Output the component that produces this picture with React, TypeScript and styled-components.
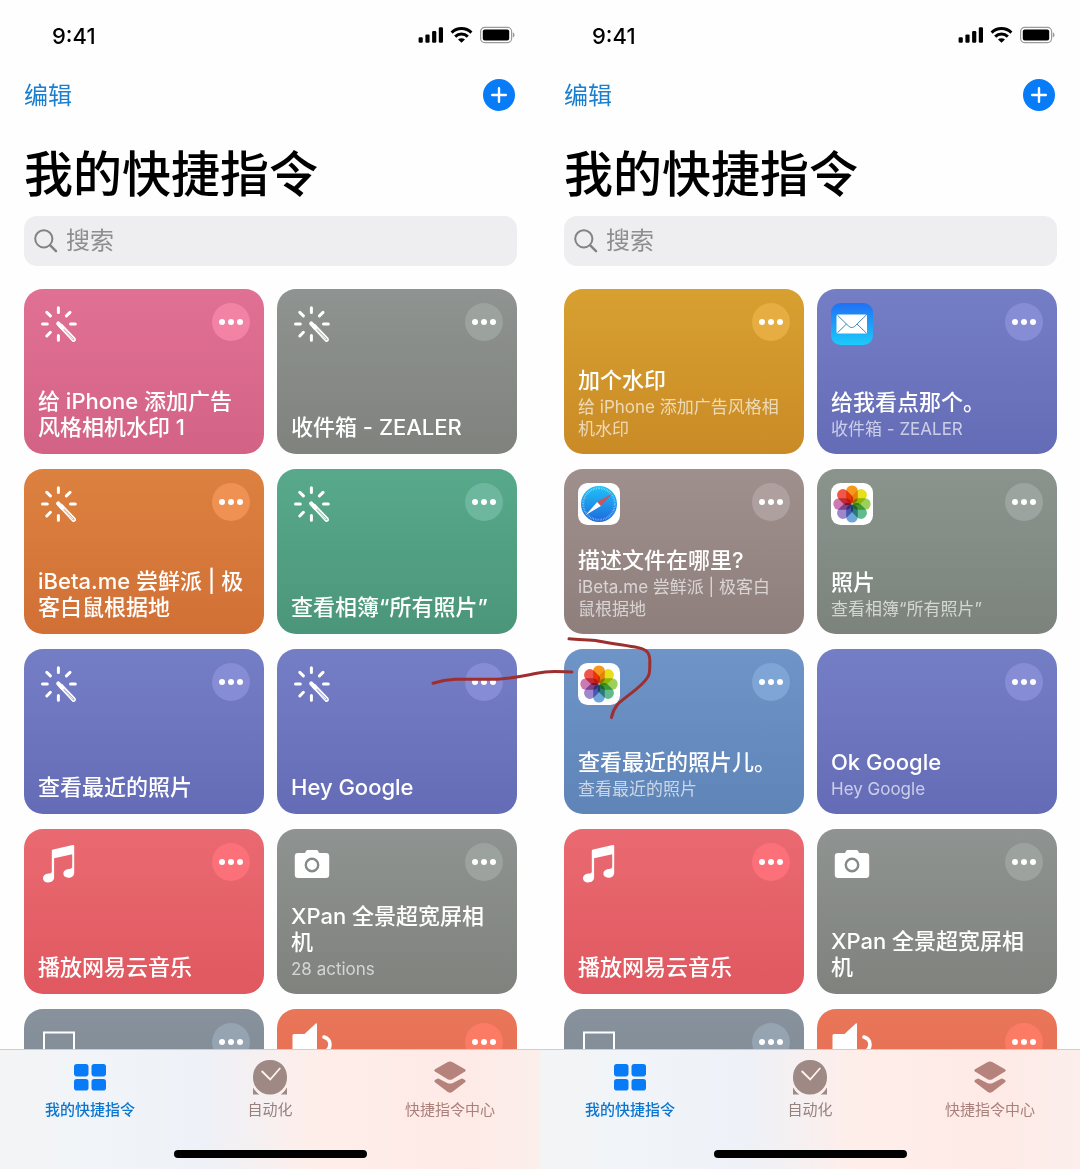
import React from "react";
import styled, { createGlobalStyle, css } from "styled-components";

const GlobalStyle = createGlobalStyle`
  *, *::before, *::after { box-sizing: border-box; }
  body {
    margin: 0;
    background: #fefefe;
    color: #000;
    font-family: Inter, "Noto Sans CJK SC", sans-serif;
  }
  h1, h2, p { margin: 0; }
  button, input { font: inherit; border: 0; padding: 0; background: none; }
`;

const Page = styled.div`
  position: relative;
  display: flex;
  height: 100vh;
  overflow: hidden;
`;

const Screen = styled.section`
  flex: 1;
  min-width: 0;
  display: flex;
  flex-direction: column;
`;

const StatusBar = styled.div`
  display: flex;
  align-items: center;
  justify-content: space-between;
  height: 70px;
  padding: 0 25px 0 52px;
`;

const Clock = styled.time`
  padding-top: 2px;
  font-size: 22px;
  line-height: 26px;
  font-weight: 500;
`;

const Toolbar = styled.header`
  display: flex;
  align-items: center;
  justify-content: space-between;
  height: 50px;
  padding: 0 25px 0 24px;
`;

const EditButton = styled.button`
  padding-top: 2px;
  font-size: 24px;
  line-height: 30px;
  font-weight: 400;
  color: #1b7fd0;
`;

const AddButton = styled.button`
  display: grid;
  place-items: center;
  width: 32px;
  height: 32px;
  border-radius: 50%;
  background: #087bf6;
`;

const Title = styled.h1`
  padding: 25px 24px 11px;
  font-size: 49px;
  line-height: 60px;
  font-weight: 500;
`;

const SearchField = styled.label`
  display: flex;
  align-items: center;
  gap: 8px;
  height: 50px;
  margin: 0 23px 23px 24px;
  padding: 0 10px;
  border-radius: 13px;
  background: #eeeef0;
`;

const SearchInput = styled.input`
  flex: 1;
  min-width: 0;
  font-size: 24px;
  line-height: 30px;
  font-weight: 400;
  outline: none;
  &::placeholder { color: #8e8e92; opacity: 1; }
`;

const ScrollArea = styled.main`
  flex: 1;
  min-height: 0;
  overflow: hidden;
`;

const CardGrid = styled.div`
  display: grid;
  grid-template-columns: 1fr 1fr;
  grid-auto-rows: 165px;
  gap: 15px 13px;
  padding: 0 23px 0 24px;
`;

const Card = styled.article<{ $from: string; $to: string }>`
  display: flex;
  flex-direction: column;
  justify-content: space-between;
  min-width: 0;
  padding: 14px;
  border-radius: 19px;
  background: linear-gradient(${(p) => p.$from}, ${(p) => p.$to});
  color: #fff;
`;

const CardTop = styled.div`
  display: flex;
  justify-content: space-between;
  align-items: flex-start;
  height: 42px;
`;

const IconSlot = styled.div`
  width: 42px;
  height: 42px;
  svg { display: block; }
`;

const MoreButton = styled.button<{ $tint: string }>`
  display: flex;
  align-items: center;
  justify-content: center;
  gap: 3px;
  width: 38px;
  height: 38px;
  border-radius: 50%;
  background: ${(p) => p.$tint};
`;

const Dot = styled.span`
  width: 6px;
  height: 6px;
  border-radius: 50%;
  background: #fff;
`;

const CardText = styled.div`
  display: flex;
  flex-direction: column;
  gap: 3px;
  padding-right: 5px;
`;

const CardTitle = styled.h2`
  font-size: 22px;
  line-height: 26px;
  font-weight: 500;
`;

const CardSubtitle = styled.p`
  font-size: 17px;
  line-height: 22px;
  font-weight: 400;
  color: rgba(255, 255, 255, 0.66);
`;

const TabBar = styled.footer`
  border-top: 1px solid #cfcdd0;
  background: linear-gradient(90deg, #f4f4f5 0%, #f1f4f8 15%, #eef1f7 38%, #f5f0f2 47%, #feeeea 58%, #feeae6 85%, #fbeeeb 100%);
`;

const Tabs = styled.nav`
  display: grid;
  grid-template-columns: repeat(3, 1fr);
  height: 100px;
`;

const Tab = styled.button<{ $active?: boolean; $tone: string }>`
  display: flex;
  flex-direction: column;
  align-items: center;
  gap: 5px;
  padding-top: 9px;
  height: 100px;
  font-size: 15px;
  line-height: 20px;
  color: ${(p) => p.$tone};
  ${(p) => p.$active && css`font-weight: 500;`}
`;

const TabGlyph = styled.span`
  display: grid;
  place-items: center;
  height: 36px;
`;

const HomeIndicator = styled.div`
  width: 193px;
  height: 8px;
  margin: 0 auto 11px;
  border-radius: 4px;
  background: #000;
`;

const Annotation = styled.svg`
  position: absolute;
  top: 630px;
  left: calc(50% - 115px);
  pointer-events: none;
`;

const StatusIcons = () => (
  <svg width="97" height="18" viewBox="0 0 97 18" aria-hidden="true">
    <rect x="0.6" y="11.3" width="4.2" height="5.4" rx="1.2" />
    <rect x="7.4" y="8.4" width="4.2" height="8.3" rx="1.2" />
    <rect x="14.1" y="5" width="4.2" height="11.7" rx="1.2" />
    <rect x="20.8" y="1.2" width="4.2" height="15.5" rx="1.2" />
    <g fill="none" stroke="#000" strokeWidth="3">
      <path d="M33.6 6.6a14.2 14.2 0 0 1 19.8 0" />
      <path d="M37.2 10.6a9 9 0 0 1 12.6 0" />
    </g>
    <path d="M43.5 16.8l-3.5-3.2a5 5 0 0 1 7 0z" />
    <rect x="62.6" y="1.4" width="31" height="15.2" rx="4" fill="none" stroke="#9b9b9b" strokeWidth="1.2" />
    <rect x="64.8" y="3.6" width="26.4" height="10.8" rx="2" />
    <path d="M94.8 6.6c2.3.6 2.3 4.2 0 4.8z" fill="#9b9b9b" />
  </svg>
);

const Wand = () => (
  <svg width="42" height="42" viewBox="0 0 42 42" fill="none" stroke="#fff" strokeLinecap="round" aria-hidden="true">
    <path
      strokeWidth="3"
      d="M20.4 4.8v4.8M20.4 32.6v4.6M4.5 21h4.800M32.500 21h4.800M8.800 9.400l3.600 3.500M32 9.400l-3.600 3.500M8.800 33l3.600-3.700"
    />
    <path strokeWidth="4.200" d="M20.300 20.600l4 4.200" />
    <path strokeWidth="1.600" strokeLinejoin="round" d="M21.600 23.600l13 14.200c1.600 1 3.200-.4 2.300-2.200L23.600 21.600" />
    <path strokeWidth="0.900" d="M24 24.200l11.200 12" />
  </svg>
);

const Music = () => (
  <svg width="42" height="42" viewBox="0 0 42 42" fill="#fff" aria-hidden="true">
    <path d="M13.800 8.200c0-1 .5-1.500 1.400-1.700L34.700 2c.9-.2 1.500.2 1.500 1.100v26.600c0 3-2.400 5-6 5-3 0-4.800-1.700-4.800-4.100 0-2.900 2.300-4.200 5.300-4.700 2.500-.4 3.500-.8 3.500-2.200V11.300L16.100 15.300v19c0 3.200-2.400 5.200-6.100 5.200-3.100 0-5-1.700-5-4.200 0-2.800 2.300-4.200 5.300-4.700 2.500-.4 3.500-.8 3.500-2.200z" />
  </svg>
);

const Camera = () => (
  <svg width="42" height="42" viewBox="0 0 42 42" aria-hidden="true">
    <path
      fill="#fff"
      d="M7 10h6.200c1 0 1.300-.6 1.700-1.500.5-1.100 1-1.500 2.200-1.500h8c1.200 0 1.700.4 2.200 1.500.4.9.7 1.500 1.700 1.500h6c2 0 3.200 1.200 3.200 3v19c0 1.900-1.200 3-3.200 3H7c-2 0-3.200-1.100-3.200-3V13c0-1.800 1.200-3 3.200-3z"
    />
    <circle cx="21" cy="22" r="6.200" fill="#fff" stroke="#858a86" strokeWidth="2.400" />
  </svg>
);

const Display = () => (
  <svg width="42" height="42" viewBox="0 0 42 42" fill="none" stroke="#fff" strokeWidth="2" aria-hidden="true">
    <path d="M6 9.500h30v22H6zM21 32v6M14 38h14" />
  </svg>
);

const Speaker = () => (
  <svg width="42" height="42" viewBox="0 0 42 42" aria-hidden="true">
    <path fill="#fff" d="M1.500 12.500q0-1.500 1.500-1.500h10.500L24.800.6q1.200-.8 1.200.8v39q0 1.600-1.200.8L13.500 31H3q-1.500 0-1.500-1.500z" />
    <path fill="none" stroke="#fff" strokeWidth="3.600" strokeLinecap="round" d="M33 14c7.600 2.400 8 11.600 0.600 15" />
  </svg>
);

const Mail = () => (
  <svg width="42" height="42" viewBox="0 0 42 42" aria-hidden="true">
    <defs>
      <linearGradient id="mail-sky" x1="0" y1="0" x2="0" y2="1">
        <stop offset="0" stopColor="#2070f4" />
        <stop offset="1" stopColor="#1ccbfb" />
      </linearGradient>
    </defs>
    <rect width="42" height="42" rx="9.500" fill="url(#mail-sky)" />
    <rect x="5.500" y="11.500" width="30.500" height="19" rx="1.500" fill="#fff" />
    <g fill="none" stroke="#3a85b8" strokeWidth="1">
      <path d="M6.500 12.300l11 10.700c2.200 2 4.400 2 6.600 0L35 12.300" />
      <path d="M6.500 29.700l9-8.700M35 29.700L26 21" />
    </g>
  </svg>
);

const Safari = () => (
  <svg width="42" height="42" viewBox="0 0 42 42" aria-hidden="true">
    <defs>
      <linearGradient id="safari-sea" x1="0" y1="0" x2="0" y2="1">
        <stop offset="0" stopColor="#1fc3f7" />
        <stop offset="1" stopColor="#2068dc" />
      </linearGradient>
    </defs>
    <rect width="42" height="42" rx="9.500" fill="#fff" />
    <circle cx="21" cy="21" r="18" fill="url(#safari-sea)" />
    <circle cx="21" cy="21" r="15.800" fill="none" stroke="#fff" strokeOpacity="0.600" strokeWidth="2" strokeDasharray="0.550 1.105" />
    <path d="M34.500 10.500L19.200 19l3.600 4z" fill="#d0505c" />
    <path d="M7.800 32l11.400-13 3.600 4z" fill="#fff" />
  </svg>
);

const PETALS = ["#f7981d", "#e8de1c", "#9bd05a", "#62bb8c", "#6ea6dc", "#9c88ca", "#cd79b2", "#f0564a"];

const Petal = styled.rect`
  mix-blend-mode: multiply;
`;

const Photos = () => (
  <svg width="42" height="42" viewBox="0 0 42 42" aria-hidden="true">
    <rect width="42" height="42" rx="9.500" fill="#fff" />
    {PETALS.map((color, i) => (
      <Petal
        key={color}
        x="15.200"
        y="2.400"
        width="11.600"
        height="18"
        rx="5.600"
        fill={color}
        transform={`rotate(${i * 45} 21 21)`}
      />
    ))}
  </svg>
);

const GridGlyph = () => (
  <svg width="32" height="27" viewBox="0 0 32 27" fill="#087bf6" aria-hidden="true">
    <rect width="14.500" height="12.400" rx="2.800" />
    <rect x="17.500" width="14.500" height="12.400" rx="2.800" />
    <rect y="15" width="14.500" height="11.600" rx="2.800" />
    <rect x="17.500" y="15" width="14.500" height="11.600" rx="2.800" />
  </svg>
);

const ClockGlyph = () => (
  <svg width="34" height="35" viewBox="0 0 34 35" aria-hidden="true">
    <path fill="#9f8985" d="M0 27q2.400 4.600 6.500 7.400H0zM34 27q-2.400 4.600-6.500 7.400H34z" />
    <rect width="34" height="34.400" rx="16.500" fill="#9f8985" />
    <path d="M9.200 11.500l8 8 9.600-11" fill="none" stroke="#fff3ef" strokeWidth="1.800" strokeLinecap="round" />
    <path d="M-.5 24.200C1 28 4 32 8 34.700M34.500 24.200C33 28 30 32 26 34.700" fill="none" stroke="#faefed" strokeWidth="1.600" />
  </svg>
);

const StackGlyph = () => (
  <svg width="34" height="33" viewBox="0 0 34 33" fill="#b6837c" aria-hidden="true">
    <path d="M14.800 1Q17 0 19.200 1L32 8.200q1.600 1.200 0 2.400l-12.600 7.600q-2.400 1.200-4.800 0L2 10.600Q.4 9.400 2 8.200z" />
    <path d="M5.400 17.400l8.800 4.600q2.800 1.200 5.600 0l8.800-4.600q1.200-.2 3.400 1.500 1.600 1.200 0 2.400l-12.800 9.700q-2.200 1.400-4.400 0L2 21.300q-1.600-1.200 0-2.400 2.200-1.700 3.400-1.500z" />
  </svg>
);

const icons = {
  wand: Wand,
  music: Music,
  camera: Camera,
  display: Display,
  speaker: Speaker,
  mail: Mail,
  safari: Safari,
  photos: Photos,
};

const palette = {
  pink: { from: "#e17194", to: "#d36287", tint: "#f383a5" },
  gray: { from: "#8f9391", to: "#7f827d", tint: "#9ca29d" },
  orange: { from: "#dc813f", to: "#d17036", tint: "#ef9152" },
  green: { from: "#58a98b", to: "#4b967b", tint: "#6cb79d" },
  indigo: { from: "#747ec5", to: "#656cb7", tint: "#868dd4" },
  red: { from: "#ea6a71", to: "#e05860", tint: "#fc7079" },
  slate: { from: "#87929d", to: "#76818c", tint: "#96a3b0" },
  coral: { from: "#ea7659", to: "#de6548", tint: "#fc7b64" },
  amber: { from: "#d7a030", to: "#ca8b26", tint: "#e6ad43" },
  taupe: { from: "#9f908e", to: "#8e7e7c", tint: "#ada09e" },
  sage: { from: "#8a948d", to: "#7c837d", tint: "#9ba49e" },
  blue: { from: "#6f94c8", to: "#5f84b7", tint: "#7fa4d6" },
};

interface Shortcut {
  title: string;
  subtitle?: string;
  icon?: keyof typeof icons;
  color: keyof typeof palette;
}

const original: Shortcut[] = [
  { title: "给 iPhone 添加广告风格相机水印 1", icon: "wand", color: "pink" },
  { title: "收件箱 - ZEALER", icon: "wand", color: "gray" },
  { title: "iBeta.me 尝鲜派 | 极客白鼠根据地", icon: "wand", color: "orange" },
  { title: "查看相簿“所有照片”", icon: "wand", color: "green" },
  { title: "查看最近的照片", icon: "wand", color: "indigo" },
  { title: "Hey Google", icon: "wand", color: "indigo" },
  { title: "播放网易云音乐", icon: "music", color: "red" },
  { title: "XPan 全景超宽屏相机", subtitle: "28 actions", icon: "camera", color: "gray" },
  { title: "", icon: "display", color: "slate" },
  { title: "", icon: "speaker", color: "coral" },
];

const renamed: Shortcut[] = [
  { title: "加个水印", subtitle: "给 iPhone 添加广告风格相机水印", color: "amber" },
  { title: "给我看点那个。", subtitle: "收件箱 - ZEALER", icon: "mail", color: "indigo" },
  { title: "描述文件在哪里?", subtitle: "iBeta.me 尝鲜派 | 极客白鼠根据地", icon: "safari", color: "taupe" },
  { title: "照片", subtitle: "查看相簿“所有照片”", icon: "photos", color: "sage" },
  { title: "查看最近的照片儿。", subtitle: "查看最近的照片", icon: "photos", color: "blue" },
  { title: "Ok Google", subtitle: "Hey Google", color: "indigo" },
  { title: "播放网易云音乐", icon: "music", color: "red" },
  { title: "XPan 全景超宽屏相机", icon: "camera", color: "gray" },
  { title: "", icon: "display", color: "slate" },
  { title: "", icon: "speaker", color: "coral" },
];

const ShortcutCard = ({ title, subtitle, icon, color }: Shortcut) => {
  const Icon = icon ? icons[icon] : null;
  const { from, to, tint } = palette[color];
  return (
    <Card $from={from} $to={to}>
      <CardTop>
        <IconSlot>{Icon && <Icon />}</IconSlot>
        <MoreButton type="button" aria-label="更多" $tint={tint}>
          <Dot />
          <Dot />
          <Dot />
        </MoreButton>
      </CardTop>
      <CardText>
        {title && <CardTitle>{title}</CardTitle>}
        {subtitle && <CardSubtitle>{subtitle}</CardSubtitle>}
      </CardText>
    </Card>
  );
};

const Phone = ({ shortcuts }: { shortcuts: Shortcut[] }) => (
  <Screen>
    <StatusBar>
      <Clock>9:41</Clock>
      <StatusIcons />
    </StatusBar>
    <Toolbar>
      <EditButton type="button">编辑</EditButton>
      <AddButton type="button" aria-label="添加">
        <svg width="16" height="16" viewBox="0 0 16 16" stroke="#fff" strokeWidth="2.400" strokeLinecap="round" aria-hidden="true">
          <path d="M8 1.200v13.600M1.200 8h13.600" />
        </svg>
      </AddButton>
    </Toolbar>
    <Title>我的快捷指令</Title>
    <SearchField>
      <svg width="24" height="24" viewBox="0 0 24 24" fill="none" stroke="#828286" strokeLinecap="round" aria-hidden="true">
        <circle cx="9.800" cy="9.800" r="8.600" strokeWidth="2" />
        <path d="M16.200 16.400l5.800 5.800" strokeWidth="2.500" />
      </svg>
      <SearchInput type="search" placeholder="搜索" aria-label="搜索" />
    </SearchField>
    <ScrollArea>
      <CardGrid>
        {shortcuts.map((shortcut, i) => (
          <ShortcutCard key={i} {...shortcut} />
        ))}
      </CardGrid>
    </ScrollArea>
    <TabBar>
      <Tabs>
        <Tab type="button" $active $tone="#0b76d1">
          <TabGlyph><GridGlyph /></TabGlyph>
          我的快捷指令
        </Tab>
        <Tab type="button" $tone="#96817f">
          <TabGlyph><ClockGlyph /></TabGlyph>
          自动化
        </Tab>
        <Tab type="button" $tone="#a9807b">
          <TabGlyph><StackGlyph /></TabGlyph>
          快捷指令中心
        </Tab>
      </Tabs>
      <HomeIndicator />
    </TabBar>
  </Screen>
);

export default function App() {
  return (
    <>
      <GlobalStyle />
      <Page>
        <Phone shortcuts={original} />
        <Phone shortcuts={renamed} />
        <Annotation
          width="235"
          height="96"
          viewBox="425 630 235 96"
          fill="none"
          stroke="#9f2f2f"
          strokeWidth="3"
          strokeLinecap="round"
          strokeLinejoin="round"
          aria-hidden="true"
        >
          <path d="M433 683.300C440 681 447 679.600 455 679.300C470 678.800 485 679.800 500 679C520 677.500 530 674 545 671.900C554 671.200 563 671.800 572 672" />
          <path d="M569 638.800C580 640 590 639.500 598 640.900C614 644 628 645.500 638 647.600C646 649.500 649.500 652 649.800 660C650 674 650 676 642.500 683.500C634 692 624 698 617.500 704.500C613 710 612.500 713 611.500 717.500" />
        </Annotation>
      </Page>
    </>
  );
}
